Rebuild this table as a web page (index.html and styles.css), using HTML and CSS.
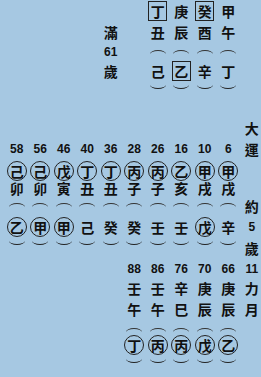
FILE: index.html
```html
<!DOCTYPE html>
<html>
<head>
<meta charset="utf-8">
<link rel="stylesheet" href="styles.css">
</head>
<body>
<div class="chart">
  <section class="natal">
    <div class="row h21"><span></span><span></span><span></span><span></span><span></span><span></span><span class="ch box">丁</span><span class="ch">庚</span><span class="ch box">癸</span><span class="ch">甲</span><span></span></div>
    <div class="row h21"><span></span><span></span><span></span><span></span><span class="ch">滿</span><span></span><span class="ch">丑</span><span class="ch">辰</span><span class="ch">酉</span><span class="ch">午</span><span></span></div>
    <div class="row h19"><span></span><span></span><span></span><span></span><span class="num">61</span><span></span><span class="arc up"></span><span class="arc up"></span><span class="arc up"></span><span class="arc up"></span><span></span></div>
    <div class="row h20"><span></span><span></span><span></span><span></span><span class="ch">歲</span><span></span><span class="ch">己</span><span class="ch box">乙</span><span class="ch">辛</span><span class="ch">丁</span><span></span></div>
    <div class="row h16"><span></span><span></span><span></span><span></span><span></span><span></span><span class="arc down"></span><span class="arc down"></span><span class="arc down"></span><span class="arc down"></span><span></span></div>
  </section>
  <section class="luck">
    <div class="row h21"><span></span><span></span><span></span><span></span><span></span><span></span><span></span><span></span><span></span><span></span><span class="ch">大</span></div>
    <div class="row h22"><span class="num">58</span><span class="num">56</span><span class="num">46</span><span class="num">40</span><span class="num">36</span><span class="num">28</span><span class="num">26</span><span class="num">16</span><span class="num">10</span><span class="num">6</span><span class="ch">運</span></div>
    <div class="row h21"><span class="ch ring">己</span><span class="ch ring">己</span><span class="ch ring">戊</span><span class="ch ring">丁</span><span class="ch ring">丁</span><span class="ch ring">丙</span><span class="ch ring">丙</span><span class="ch ring">乙</span><span class="ch ring">甲</span><span class="ch ring">甲</span><span></span></div>
    <div class="row h14"><span class="ch">卯</span><span class="ch">卯</span><span class="ch">寅</span><span class="ch">丑</span><span class="ch">丑</span><span class="ch">子</span><span class="ch">子</span><span class="ch">亥</span><span class="ch">戌</span><span class="ch">戌</span><span></span></div>
    <div class="row h22"><span class="arc up"></span><span class="arc up"></span><span class="arc up"></span><span class="arc up"></span><span class="arc up"></span><span class="arc up"></span><span class="arc up"></span><span class="arc up"></span><span class="arc up"></span><span class="arc up"></span><span class="ch">約</span></div>
    <div class="row h20"><span class="ch ring">乙</span><span class="ch ring">甲</span><span class="ch ring">甲</span><span class="ch">己</span><span class="ch">癸</span><span class="ch">癸</span><span class="ch">壬</span><span class="ch">壬</span><span class="ch ring">戊</span><span class="ch">辛</span><span class="num">5</span></div>
    <div class="row h21"><span class="arc down"></span><span class="arc down"></span><span class="arc down"></span><span class="arc down"></span><span class="arc down"></span><span class="arc down"></span><span class="arc down"></span><span class="arc down"></span><span class="arc down"></span><span class="arc down"></span><span class="ch">歲</span></div>
  </section>
  <section class="years">
    <div class="row h21"><span></span><span></span><span></span><span></span><span></span><span class="num">88</span><span class="num">86</span><span class="num">76</span><span class="num">70</span><span class="num">66</span><span class="num">11</span></div>
    <div class="row h18"><span></span><span></span><span></span><span></span><span></span><span class="ch">壬</span><span class="ch">壬</span><span class="ch">辛</span><span class="ch">庚</span><span class="ch">庚</span><span class="ch">力</span></div>
    <div class="row h23"><span></span><span></span><span></span><span></span><span></span><span class="ch">午</span><span class="ch">午</span><span class="ch">巳</span><span class="ch">辰</span><span class="ch">辰</span><span class="ch">月</span></div>
    <div class="row h15"><span></span><span></span><span></span><span></span><span></span><span class="arc up"></span><span class="arc up"></span><span class="arc up"></span><span class="arc up"></span><span class="arc up"></span><span></span></div>
    <div class="row h20"><span></span><span></span><span></span><span></span><span></span><span class="ch ring">丁</span><span class="ch ring">丙</span><span class="ch ring">丙</span><span class="ch ring">戊</span><span class="ch ring">乙</span><span></span></div>
    <div class="row h16"><span></span><span></span><span></span><span></span><span></span><span class="arc down"></span><span class="arc down"></span><span class="arc down"></span><span class="arc down"></span><span class="arc down"></span><span></span></div>
  </section>
</div>
</body>
</html>
```

FILE: styles.css
```css
html, body {
  margin: 0;
  padding: 0;
  background: #a6c8e2;
}
body {
  width: 261px;
  height: 377px;
  overflow: hidden;
  color: #111;
  font-family: "Noto Sans CJK TC", sans-serif;
}
.chart {
  padding: 0 0 0 5px;
}
.luck {
  margin-top: 20px;
}
.row {
  display: grid;
  grid-template-columns: repeat(11, 23.5px);
}
.row > span {
  display: flex;
  align-items: center;
  justify-content: center;
}
.h14 { height: 14px; }
.h15 { height: 15px; }
.h16 { height: 16px; }
.h17 { height: 17px; }
.h18 { height: 18px; }
.h19 { height: 19px; }
.h20 { height: 20px; }
.h21 { height: 21px; }
.h22 { height: 22px; }
.h23 { height: 23px; }
.ch {
  font-size: 14px;
  font-weight: 700;
  line-height: 1;
}
.num {
  font-family: "Liberation Sans", Arial, sans-serif;
  font-size: 12px;
  font-weight: 700;
  line-height: 1;
}
.row > .box {
  width: 17px;
  height: 18px;
  margin: auto;
  border: 1px solid #222;
  box-sizing: content-box;
}
.row > .ring {
  width: 18px;
  height: 18px;
  margin: auto;
  border: 1px solid #222;
  border-radius: 50%;
}
.row > .arc {
  width: 16px;
  height: 8px;
  margin: auto;
  box-sizing: border-box;
  border: 0 solid transparent;
  border-radius: 50%;
}
.row > .up {
  border-top: 1.2px solid #333;
  margin-top: 8px;
}
.row > .down {
  border-bottom: 1.6px solid #222;
  margin-top: 0;
}
```
